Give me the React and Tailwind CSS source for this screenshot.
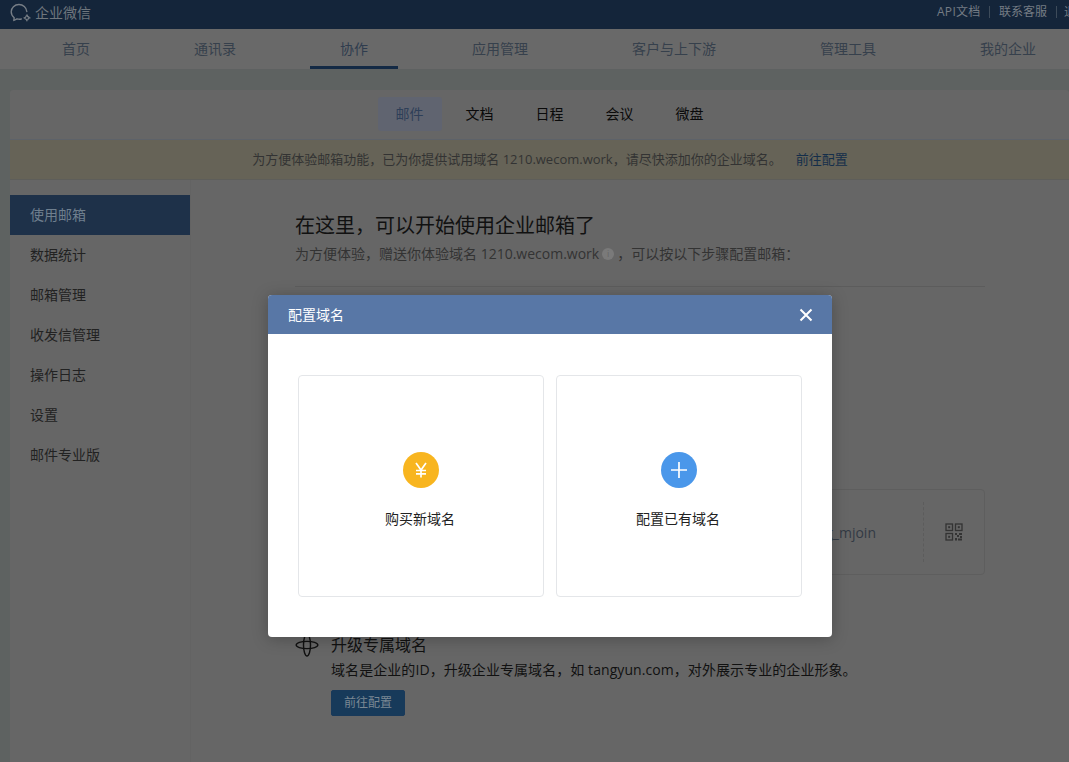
import React from "react";

const navItems = ["首页", "通讯录", "协作", "应用管理", "客户与上下游", "管理工具", "我的企业"];
const tabs = ["邮件", "文档", "日程", "会议", "微盘"];
const sideItems = ["使用邮箱", "数据统计", "邮箱管理", "收发信管理", "操作日志", "设置", "邮件专业版"];

function Logo() {
  return (
    <svg width="24" height="24" viewBox="0 0 24 24" fill="none" className="shrink-0 mt-[4px]">
      <path
        d="M16.8 9.500C16.500 5.500 13 2.500 9 2.500 4.500 2.500 1.200 5.800 1.200 9.800c0 2.500 1.200 4.500 3 5.900l-.4 2.800 3.200-1.700c1.300.4 3 .5 4.300.2"
        stroke="#777e86"
        strokeWidth="1.4"
        strokeLinecap="round"
        strokeLinejoin="round"
      />
      <path
        d="M14 15.800c1.300 0 2-.6 2.200-1.800M17 12.900c.1 1.300.7 2 1.900 2.200M20 15.900c-1.300 0-2 .6-2.200 1.800M16.900 18.800c-.1-1.300-.7-2-1.900-2.200"
        stroke="#777e86"
        strokeWidth="1.300"
        strokeLinecap="round"
      />
    </svg>
  );
}

function TopBar() {
  return (
    <div className="h-[29px] bg-[#14253a] flex items-center justify-between pl-[10px] overflow-hidden">
      <div className="flex items-center gap-[1px] mt-[-5px]">
        <Logo />
        <span className="text-[14px] text-[#6f767d]">企业微信</span>
      </div>
      <div className="flex items-center text-[12px] text-[#747c84] whitespace-nowrap mr-[-7px] mt-[-5px]">
        <span className="w-[44px] tracking-[0.3px]">API文档</span>
        <span className="w-px h-[12px] bg-[#3d4b5a] ml-[8px] mr-[9px]"></span>
        <span>联系客服</span>
        <span className="w-px h-[12px] bg-[#3d4b5a] ml-[9px] mr-[7px]"></span>
        <span className="w-[12px] overflow-hidden">退</span>
      </div>
    </div>
  );
}

function NavBar() {
  return (
    <div className="h-[41px] bg-[#696969] border-b border-[#5e6161] flex pl-[32px] gap-[44px] whitespace-nowrap overflow-hidden">
      {navItems.map((item) => (
        <div
          key={item}
          className={
            item === "协作"
              ? "h-[40px] px-[30px] pt-[1px] flex items-center text-[14px] text-[#2f3c4e] border-b-[3px] border-[#142a45]"
              : "h-[40px] px-[30px] pb-[2px] flex items-center text-[14px] text-[#36404c]"
          }
        >
          {item}
        </div>
      ))}
    </div>
  );
}

function Tabs() {
  return (
    <div className="h-[50px] border-b border-[#5d6269] flex justify-center pt-[7px] bg-[#666666] shrink-0">
      <div className="flex gap-[6px] ml-[20px]">
        {tabs.map((t) => (
          <div
            key={t}
            className={
              t === "邮件"
                ? "w-[64px] h-[34px] pb-[2px] rounded-[3px] bg-[#606470] text-[#2e3f58] flex items-center justify-center text-[14px]"
                : "w-[64px] h-[34px] pb-[2px] flex items-center justify-center text-[14px] text-[#0a0a0a]"
            }
          >
            {t}
          </div>
        ))}
      </div>
    </div>
  );
}

function Sidebar() {
  return (
    <div className="w-[181px] shrink-0 pt-[15px] bg-[#666666] border-r border-[#636363]">
      {sideItems.map((s) => (
        <div
          key={s}
          className={
            s === "使用邮箱"
              ? "h-[40px] pl-[20px] pb-[2px] flex items-center text-[14px] bg-[#1e3149] text-[#6f7f8e]"
              : "h-[40px] pl-[20px] pb-[2px] flex items-center text-[14px] text-[#222222]"
          }
        >
          {s}
        </div>
      ))}
    </div>
  );
}

function QrIcon() {
  return (
    <svg width="18" height="18" viewBox="0 0 18 18" fill="none">
      <g stroke="#333333" strokeWidth="1.3">
        <rect x="1" y="1" width="6.500" height="6.500" />
        <rect x="10.500" y="1" width="6.500" height="6.500" />
        <rect x="1" y="10.500" width="6.500" height="6.500" />
      </g>
      <g fill="#333333">
        <rect x="3.200" y="3.200" width="2" height="2" />
        <rect x="12.800" y="3.200" width="2" height="2" />
        <rect x="3.200" y="12.800" width="2" height="2" />
        <rect x="10" y="10" width="2" height="2" />
        <rect x="14" y="10" width="3" height="2" />
        <rect x="12" y="12" width="2" height="2" />
        <rect x="15" y="13" width="2" height="2" />
        <rect x="10" y="15" width="2" height="2.500" />
        <rect x="13" y="15.500" width="4" height="2" />
      </g>
    </svg>
  );
}

function GlobeIcon() {
  return (
    <svg width="24" height="24" viewBox="0 0 24 24" fill="none" stroke="#111111" strokeWidth="1.4" className="shrink-0">
      <ellipse cx="12" cy="12" rx="10.800" ry="3.600" />
      <ellipse cx="12" cy="12" rx="3.500" ry="11" />
    </svg>
  );
}

function Main() {
  return (
    <div className="flex-1 pl-[104px] bg-[#666666]">
      <div className="w-[690px]">
        <h1 className="text-[20px] leading-[28px] text-[#111111] font-normal mt-[32px]">在这里，可以开始使用企业邮箱了</h1>
        <p className="text-[14px] leading-[20px] text-[#333333] mt-[4px] flex items-center">
          为方便体验，赠送你体验域名 1210.wecom.work
          <span className="w-[12px] h-[12px] rounded-full bg-[#7a7a7a] text-[#666666] text-[9px] leading-[12px] text-center mx-[3px]">i</span>
          ，可以按以下步骤配置邮箱：
        </p>
        <div className="h-px bg-[#5c5c5c] mt-[22px]"></div>

        <div className="mt-[202px] h-[86px] border border-[#5e5e5e] rounded-[4px] flex items-center justify-end">
          <span className="text-[14px] text-[#333a44]">wwlog_mjoin</span>
          <div className="ml-[47px] w-px h-[60px] border-l border-dashed border-[#5c5c5c]"></div>
          <div className="w-[60px] flex justify-center">
            <QrIcon />
          </div>
        </div>

        <div className="mt-[58px] flex gap-[12px]">
          <GlobeIcon />
          <div>
            <div className="text-[16px] leading-[24px] text-[#111111]">升级专属域名</div>
            <div className="text-[14px] leading-[20px] text-[#111111] mt-[3px] whitespace-nowrap tracking-[0.07px]">
              域名是企业的ID，升级企业专属域名，如 tangyun.com，对外展示专业的企业形象。
            </div>
            <button className="mt-[10px] w-[74px] h-[26px] rounded-[2px] bg-[#173a5a] border border-[#18395a] text-[12px] text-[#7b8894] flex items-center justify-center">
              前往配置
            </button>
          </div>
        </div>
      </div>
    </div>
  );
}

function Modal() {
  return (
    <div className="absolute inset-0 pl-[268px] pt-[295px]">
      <div className="w-[564px] h-[342px] bg-white rounded-[4px] overflow-hidden shadow-[0_2px_16px_rgba(0,0,0,0.25)]">
        <div className="h-[39px] bg-[#5877a6] flex items-center justify-between pl-[20px] pr-[19px]">
          <span className="text-[14px] text-white">配置域名</span>
          <svg width="14" height="14" viewBox="0 0 14 14" fill="none" stroke="white" strokeWidth="2">
            <path d="M1.500 1.500l11 11M12.500 1.500l-11 11" />
          </svg>
        </div>
        <div className="pt-[41px] px-[30px] flex gap-[12px]">
          <div className="w-[246px] h-[222px] border border-[#e4e6e9] rounded-[4px] flex flex-col items-center pt-[76px]">
            <div className="w-[36px] h-[36px] rounded-full bg-[#f8b51f] flex items-center justify-center">
              <svg width="14" height="16" viewBox="0 0 14 16" fill="none" stroke="white" strokeWidth="1.7">
                <path d="M2 1l5 7 5-7M7 8v7.500M2 8.500h10M2 11.800h10" />
              </svg>
            </div>
            <div className="text-[14px] text-[#222222] mt-[21px] leading-[20px] mr-[2px]">购买新域名</div>
          </div>
          <div className="w-[246px] h-[222px] border border-[#e4e6e9] rounded-[4px] flex flex-col items-center pt-[76px]">
            <div className="w-[36px] h-[36px] rounded-full bg-[#4a97ea] flex items-center justify-center">
              <svg width="16" height="16" viewBox="0 0 16 16" fill="none" stroke="white" strokeWidth="1.7">
                <path d="M8 0v16M0 8h16" />
              </svg>
            </div>
            <div className="text-[14px] text-[#222222] mt-[21px] leading-[20px] mr-[2px]">配置已有域名</div>
          </div>
        </div>
      </div>
    </div>
  );
}

export default function App() {
  return (
    <div className="relative w-[1069px] h-[762px] overflow-hidden bg-[#5e6261] font-['Open_Sans','Noto_Sans_CJK_SC',sans-serif]">
      <TopBar />
      <NavBar />
      <div className="ml-[10px] mt-[20px] h-[673px] rounded-t-[3px] overflow-hidden flex flex-col">
        <Tabs />
        <div className="h-[40px] bg-[#666357] border-b border-[#5e5e5a] flex items-center justify-center text-[13px] text-[#333333] whitespace-nowrap shrink-0 pl-[21px]">
          为方便体验邮箱功能，已为你提供试用域名 1210.wecom.work，请尽快添加你的企业域名。
          <span className="ml-[14px] text-[#142e4a]">前往配置</span>
        </div>
        <div className="flex flex-1">
          <Sidebar />
          <Main />
        </div>
      </div>
      <Modal />
    </div>
  );
}
